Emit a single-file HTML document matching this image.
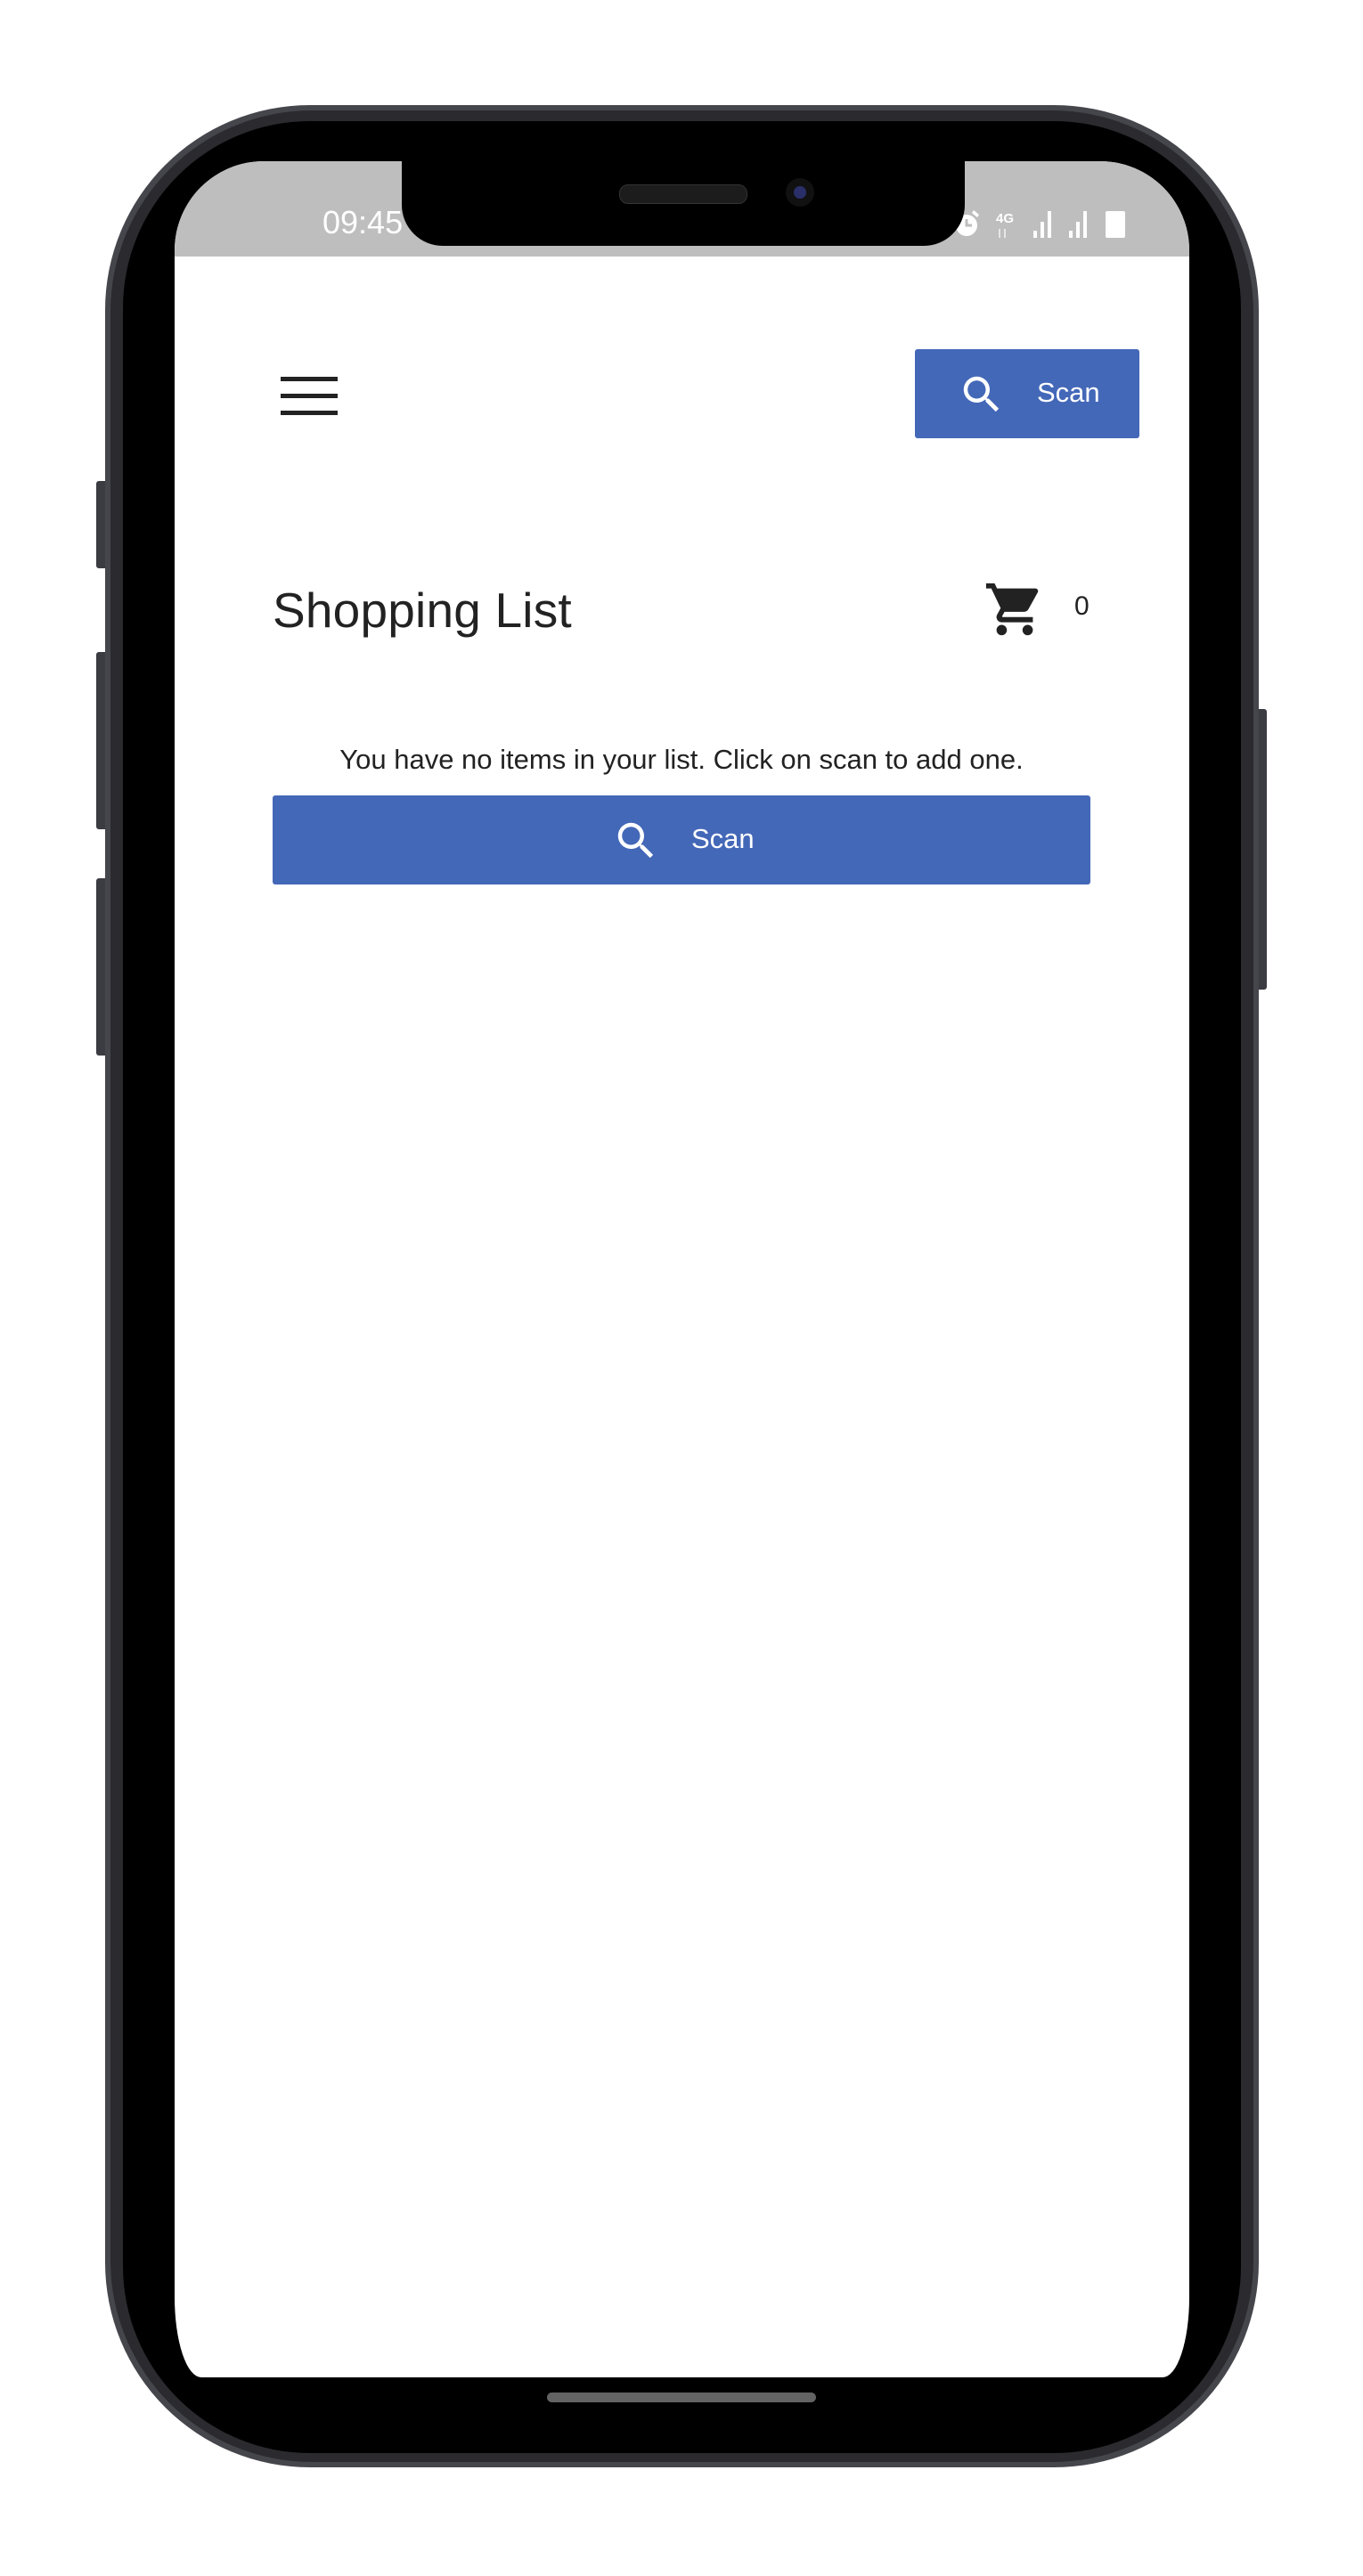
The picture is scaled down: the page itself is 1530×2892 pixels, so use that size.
<!DOCTYPE html>
<html><head><meta charset="utf-8"><style>
html,body{margin:0;padding:0;background:#fff;}
body{width:1530px;height:2892px;position:relative;overflow:hidden;font-family:"Liberation Sans",sans-serif;}
.abs{position:absolute;}
.btnside{position:absolute;background:#3b3b42;border-radius:3px;}
</style></head><body>
<div class="btnside" style="left:108px;top:540px;width:14px;height:98px"></div>
<div class="btnside" style="left:108px;top:732px;width:14px;height:199px"></div>
<div class="btnside" style="left:108px;top:986px;width:14px;height:199px"></div>
<div class="btnside" style="left:1408px;top:796px;width:14px;height:315px"></div>
<div class="abs" style="left:118px;top:118px;width:1295px;height:2652px;background:#45454c;border-radius:230px;"></div>
<div class="abs" style="left:124px;top:124px;width:1283px;height:2640px;background:#2a2a2f;border-radius:226px;"></div>
<div class="abs" style="left:138px;top:136px;width:1255px;height:2618px;background:#000;border-radius:210px;"></div>
<div class="abs" style="left:196px;top:181px;width:1139px;height:2488px;background:#fff;border-radius:100px 100px 30px 30px / 100px 100px 90px 90px;overflow:hidden;">
  <div class="abs" style="left:0;top:0;width:1139px;height:107px;background:#bebebe;"></div>
  <div class="abs" style="left:166px;top:48px;color:#fff;font-size:36px;">09:45</div>
  <svg class="abs" style="left:872px;top:52px" width="210" height="40" viewBox="0 0 210 40">
    <g fill="#fff">
      <circle cx="17" cy="20" r="12"/>
      <path d="M3 8 L9 3 L11 6 L5 11Z M31 8 L25 3 L23 6 L29 11Z"/>
      <text x="50" y="17" font-size="15" font-family="Liberation Sans" font-weight="bold">4G</text>
      <rect x="92" y="26" width="4" height="8"/><rect x="100" y="16" width="4" height="18"/><rect x="108" y="4" width="4" height="30"/>
      <rect x="132" y="26" width="4" height="8"/><rect x="140" y="16" width="4" height="18"/><rect x="148" y="4" width="4" height="30"/>
      <rect x="173" y="4" width="22" height="30" rx="2"/>
    </g>
    <path d="M17 13 V20 H23" stroke="#bebebe" stroke-width="3" fill="none"/>
    <path d="M54 24 v10 M60 24 v10" stroke="#e6e6e6" stroke-width="2"/>
  </svg>
  <div class="abs" style="left:119px;top:242px;width:64px;height:5px;background:#222"></div>
  <div class="abs" style="left:119px;top:261px;width:64px;height:5px;background:#222"></div>
  <div class="abs" style="left:119px;top:280px;width:64px;height:5px;background:#222"></div>
  <div class="abs" style="left:831px;top:211px;width:252px;height:100px;background:#4468b8;border-radius:3px;"></div>
  <svg class="abs" style="left:879px;top:235px" width="54" height="54" viewBox="0 0 24 24"><path fill="#fff" d="M15.5 14h-.79l-.28-.27A6.47 6.47 0 0 0 16 9.5 6.5 6.5 0 1 0 9.5 16c1.61 0 3.09-.59 4.23-1.57l.27.28v.79l5 4.99L20.49 19l-4.99-5zm-6 0C7.01 14 5 11.99 5 9.5S7.01 5 9.5 5 14 7.01 14 9.5 11.99 14 9.5 14z"/></svg>
  <div class="abs" style="left:968px;top:242px;color:#fff;font-size:31px;">Scan</div>
  <div class="abs" style="left:110px;top:472px;color:#222;font-size:55px;letter-spacing:0.2px;">Shopping List</div>
  <svg class="abs" style="left:908px;top:468px" width="70" height="70" viewBox="0 0 24 24"><path fill="#222" d="M7 18c-1.1 0-1.99.9-1.99 2S5.9 22 7 22s2-.9 2-2-.9-2-2-2zM1 2v2h2l3.6 7.59-1.35 2.45c-.16.28-.25.61-.25.96 0 1.1.9 2 2 2h12v-2H7.42c-.14 0-.25-.11-.25-.25l.03-.12.9-1.63h7.45c.75 0 1.41-.41 1.75-1.03l3.58-6.49A1.003 1.003 0 0 0 20 4H5.21l-.94-2H1zm16 16c-1.1 0-1.99.9-1.99 2s.89 2 1.99 2 2-.9 2-2-.9-2-2-2z"/></svg>
  <div class="abs" style="left:1010px;top:483px;color:#222;font-size:30px;">0</div>
  <div class="abs" style="left:110px;top:654px;width:918px;text-align:center;color:#222;font-size:31px;letter-spacing:0px;white-space:nowrap;">You have no items in your list. Click on scan to add one.</div>
  <div class="abs" style="left:110px;top:712px;width:918px;height:100px;background:#4468b8;border-radius:3px;"></div>
  <svg class="abs" style="left:491px;top:736px" width="54" height="54" viewBox="0 0 24 24"><path fill="#fff" d="M15.5 14h-.79l-.28-.27A6.47 6.47 0 0 0 16 9.5 6.5 6.5 0 1 0 9.5 16c1.61 0 3.09-.59 4.23-1.57l.27.28v.79l5 4.99L20.49 19l-4.99-5zm-6 0C7.01 14 5 11.99 5 9.5S7.01 5 9.5 5 14 7.01 14 9.5 11.99 14 9.5 14z"/></svg>
  <div class="abs" style="left:580px;top:743px;color:#fff;font-size:31px;">Scan</div>
</div>
<div class="abs" style="left:451px;top:170px;width:632px;height:106px;background:#000;border-radius:0 0 46px 46px;"></div>
<div class="abs" style="left:695px;top:207px;width:142px;height:20px;background:#1c1c1c;border-radius:10px;border:1px solid #333;"></div>
<div class="abs" style="left:882px;top:200px;width:32px;height:32px;background:#111;border-radius:50%;"></div>
<div class="abs" style="left:891px;top:209px;width:14px;height:14px;background:#2a2f6a;border-radius:50%;"></div>
<div class="abs" style="left:614px;top:2686px;width:302px;height:11px;background:#636363;border-radius:6px;"></div>
</body></html>
